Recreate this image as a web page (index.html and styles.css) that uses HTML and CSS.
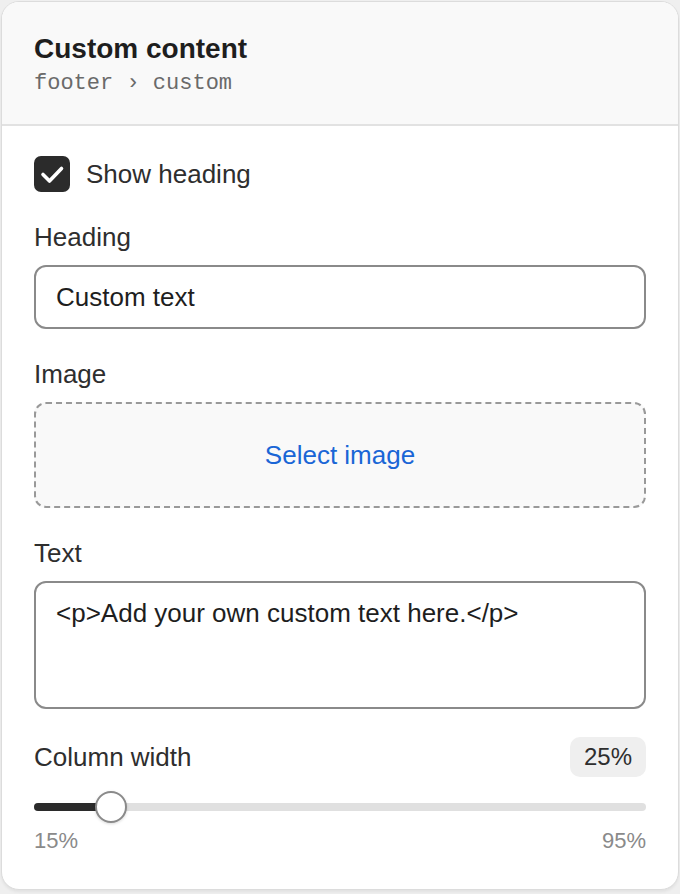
FILE: index.html
```html
<!DOCTYPE html>
<html>
<head>
<meta charset="utf-8">
<link rel="stylesheet" href="styles.css">
</head>
<body>
<div class="card">
  <header class="card-head">
    <div class="title">Custom content</div>
    <div class="path">footer › custom</div>
  </header>
  <div class="card-body">
    <label class="check-row">
      <span class="checkbox">
        <svg width="36" height="36" viewBox="0 0 36 36"><path d="M9 18.5 L15.5 25 L27.5 12.5" fill="none" stroke="#fff" stroke-width="3.6" stroke-linecap="round" stroke-linejoin="round"/></svg>
      </span>
      <span class="check-label">Show heading</span>
    </label>

    <div class="field">
      <div class="label">Heading</div>
      <div class="input">Custom text</div>
    </div>

    <div class="field">
      <div class="label">Image</div>
      <div class="dropzone"><span class="link">Select image</span></div>
    </div>

    <div class="field">
      <div class="label">Text</div>
      <div class="textarea">&lt;p&gt;Add your own custom text here.&lt;/p&gt;</div>
    </div>

    <div class="range">
      <div class="range-head">
        <span class="label">Column width</span>
        <span class="pill">25%</span>
      </div>
      <div class="slider">
        <div class="track"><div class="fill" style="width:12.5%"></div></div>
        <div class="thumb" style="left:12.5%"></div>
      </div>
      <div class="range-ends"><span>15%</span><span>95%</span></div>
    </div>
  </div>
</div>
</body>
</html>
```
FILE: styles.css
```css
* { box-sizing: border-box; }
html, body { margin: 0; padding: 0; }
body {
  background: #efefef;
  font-family: "Liberation Sans", Arial, sans-serif;
  color: #2a2a2a;
  width: 680px;
  height: 894px;
  padding: 1px;
}
.card {
  width: 678px;
  height: 889px;
  background: #fff;
  border: 1px solid #dcdcdc;
  border-radius: 18px;
  overflow: hidden;
  box-shadow: 0 2px 3px rgba(0,0,0,0.06);
}
.card-head {
  background: #f9f9f9;
  border-bottom: 2px solid #e2e2e2;
  padding: 30px 32px 25px;
}
.title {
  font-size: 28px;
  line-height: 34px;
  font-weight: 700;
  color: #1e1e1e;
}
.path {
  font-family: "Liberation Mono", "Courier New", monospace;
  font-size: 22px;
  line-height: 30px;
  margin-top: 3px;
  color: #6a6a6a;
}
.card-body {
  padding: 30px 32px 0;
  display: flex;
  flex-direction: column;
  gap: 31px;
}
.check-row {
  display: flex;
  align-items: center;
  gap: 16px;
  height: 36px;
}
.checkbox {
  width: 36px;
  height: 36px;
  border-radius: 7px;
  background: #2b2b2b;
  display: block;
}
.checkbox svg { display: block; }
.check-label {
  font-size: 26px;
  color: #2e2e2e;
}
.field {
  display: flex;
  flex-direction: column;
  gap: 14px;
}
.label {
  font-size: 26px;
  line-height: 28px;
  color: #2e2e2e;
}
.input {
  height: 64px;
  border: 2px solid #8a8a8a;
  border-radius: 12px;
  padding: 0 20px;
  display: flex;
  align-items: center;
  font-size: 26px;
  color: #1e1e1e;
}
.dropzone {
  height: 106px;
  border: 2px dashed #999;
  border-radius: 12px;
  background: #f9f9f9;
  display: flex;
  align-items: center;
  justify-content: center;
}
.link {
  font-size: 26px;
  color: #1a66d6;
}
.textarea {
  height: 128px;
  border: 2px solid #8a8a8a;
  border-radius: 12px;
  padding: 15px 20px;
  font-size: 26px;
  line-height: 30px;
  color: #1e1e1e;
}
.range {
  display: flex;
  flex-direction: column;
  margin-top: -3px;
}
.range-head {
  display: flex;
  justify-content: space-between;
  align-items: center;
  height: 40px;
}
.pill {
  background: #efefef;
  border-radius: 10px;
  height: 40px;
  padding: 0 14px;
  display: flex;
  align-items: center;
  font-size: 24px;
  color: #2e2e2e;
}
.slider {
  position: relative;
  height: 32px;
  margin-top: 14px;
  display: flex;
  align-items: center;
}
.track {
  width: 100%;
  height: 8px;
  border-radius: 4px;
  background: #e0e0e0;
  overflow: hidden;
}
.fill {
  height: 100%;
  background: #2b2b2b;
}
.thumb {
  position: absolute;
  top: 0;
  width: 32px;
  height: 32px;
  margin-left: -16px;
  border-radius: 50%;
  background: #fff;
  border: 2px solid #8a8a8a;
  box-shadow: 0 1px 3px rgba(0,0,0,0.15);
}
.range-ends {
  display: flex;
  justify-content: space-between;
  margin-top: 4px;
  font-size: 22px;
  line-height: 28px;
  color: #8a8a8a;
}
```
